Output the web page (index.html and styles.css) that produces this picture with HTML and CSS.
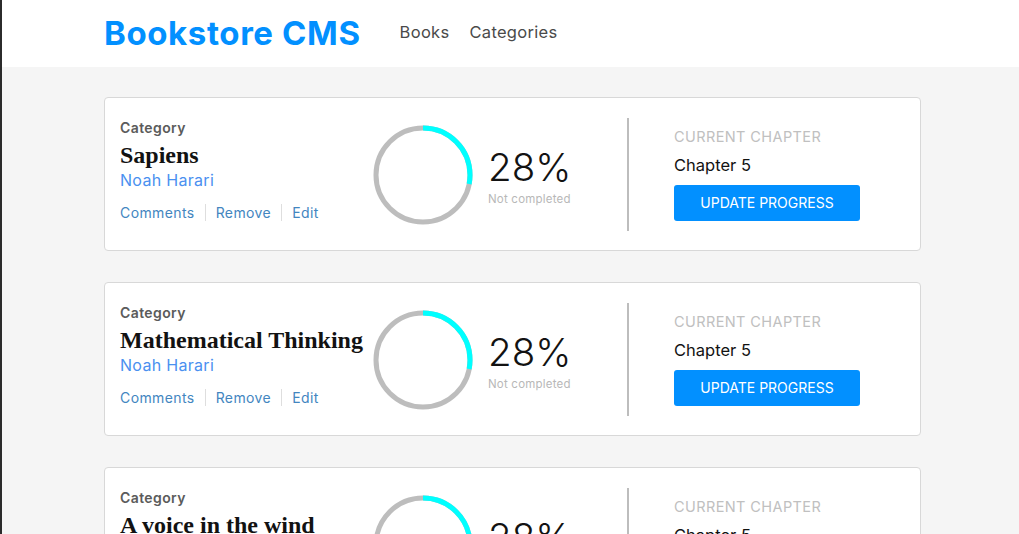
FILE: index.html
```html
<!DOCTYPE html>
<html lang="en">
<head>
<meta charset="utf-8">
<title>Bookstore CMS</title>
<link rel="stylesheet" href="styles.css">
</head>
<body>
<div class="page">
  <header class="header">
    <div class="header-inner">
      <h1 class="logo">Bookstore CMS</h1>
      <nav class="nav">
        <a href="#" class="nav-link">Books</a>
        <a href="#" class="nav-link">Categories</a>
      </nav>
    </div>
  </header>
  <main class="main">
    <div class="card">
      <div class="info">
        <div class="category">Category</div>
        <div class="title">Sapiens</div>
        <div class="author">Noah Harari</div>
        <div class="actions">
          <a href="#" class="action">Comments</a>
          <span class="sep"></span>
          <a href="#" class="action">Remove</a>
          <span class="sep"></span>
          <a href="#" class="action">Edit</a>
        </div>
      </div>
      <div class="progress">
        <svg class="ring" width="100" height="100" viewBox="0 0 100 100">
          <circle cx="50" cy="50" r="47" fill="none" stroke="#bdbdbd" stroke-width="5"/>
          <circle cx="50" cy="50" r="47" fill="none" stroke="#00ffff" stroke-width="5" stroke-dasharray="82.7 300" transform="rotate(-90 50 50)"/>
        </svg>
        <div class="stats">
          <div class="percent">28%</div>
          <div class="status">Not completed</div>
        </div>
      </div>
      <div class="divider"></div>
      <div class="chapter">
        <div class="chapter-label">CURRENT CHAPTER</div>
        <div class="chapter-name">Chapter 5</div>
        <button class="btn">UPDATE PROGRESS</button>
      </div>
    </div>
    <div class="card">
      <div class="info">
        <div class="category">Category</div>
        <div class="title">Mathematical Thinking</div>
        <div class="author">Noah Harari</div>
        <div class="actions">
          <a href="#" class="action">Comments</a>
          <span class="sep"></span>
          <a href="#" class="action">Remove</a>
          <span class="sep"></span>
          <a href="#" class="action">Edit</a>
        </div>
      </div>
      <div class="progress">
        <svg class="ring" width="100" height="100" viewBox="0 0 100 100">
          <circle cx="50" cy="50" r="47" fill="none" stroke="#bdbdbd" stroke-width="5"/>
          <circle cx="50" cy="50" r="47" fill="none" stroke="#00ffff" stroke-width="5" stroke-dasharray="82.7 300" transform="rotate(-90 50 50)"/>
        </svg>
        <div class="stats">
          <div class="percent">28%</div>
          <div class="status">Not completed</div>
        </div>
      </div>
      <div class="divider"></div>
      <div class="chapter">
        <div class="chapter-label">CURRENT CHAPTER</div>
        <div class="chapter-name">Chapter 5</div>
        <button class="btn">UPDATE PROGRESS</button>
      </div>
    </div>
    <div class="card">
      <div class="info">
        <div class="category">Category</div>
        <div class="title">A voice in the wind</div>
        <div class="author">Noah Harari</div>
        <div class="actions">
          <a href="#" class="action">Comments</a>
          <span class="sep"></span>
          <a href="#" class="action">Remove</a>
          <span class="sep"></span>
          <a href="#" class="action">Edit</a>
        </div>
      </div>
      <div class="progress">
        <svg class="ring" width="100" height="100" viewBox="0 0 100 100">
          <circle cx="50" cy="50" r="47" fill="none" stroke="#bdbdbd" stroke-width="5"/>
          <circle cx="50" cy="50" r="47" fill="none" stroke="#00ffff" stroke-width="5" stroke-dasharray="82.7 300" transform="rotate(-90 50 50)"/>
        </svg>
        <div class="stats">
          <div class="percent">28%</div>
          <div class="status">Not completed</div>
        </div>
      </div>
      <div class="divider"></div>
      <div class="chapter">
        <div class="chapter-label">CURRENT CHAPTER</div>
        <div class="chapter-name">Chapter 5</div>
        <button class="btn">UPDATE PROGRESS</button>
      </div>
    </div>
  </main>
</div>
</body>
</html>
```
FILE: styles.css
```css
* { box-sizing: border-box; }
html, body { margin: 0; padding: 0; }
body {
  font-family: "Inter", "Open Sans", sans-serif;
  background: #f5f5f5;
  overflow: hidden;
  height: 534px;
}
.page {
  border-left: 2px solid #2b2b2b;
  height: 534px;
  overflow: hidden;
}
.header {
  background: #fff;
  height: 67px;
}
.header-inner {
  padding-left: 102px;
  display: flex;
  align-items: center;
  height: 67px;
}
.logo {
  margin: 0;
  font-size: 33px;
  font-weight: 700;
  color: #0290ff;
  letter-spacing: 0.6px;
  margin-top: -2px;
}
.nav {
  display: flex;
  gap: 20px;
  margin-left: 39px;
  margin-top: -4px;
}
.nav-link {
  font-size: 16.5px;
  color: #4a4a4a;
  text-decoration: none;
  letter-spacing: 0.3px;
}
.main {
  padding: 30px 0 0 102px;
  display: flex;
  flex-direction: column;
  gap: 31px;
}
.card {
  width: 817px;
  height: 154px;
  background: #fff;
  border: 1px solid #d8d8d8;
  border-radius: 4px;
  display: flex;
  align-items: center;
  padding: 0 15px;
  flex-shrink: 0;
}
.info {
  width: 253px;
  flex-shrink: 0;
  display: flex;
  flex-direction: column;
  margin-top: -8px;
}
.category {
  font-size: 14px;
  font-weight: 600;
  color: #5b5b5b;
  line-height: 18px;
  letter-spacing: 0.4px;
}
.title {
  font-family: "Liberation Serif", serif;
  font-weight: 700;
  font-size: 24px;
  color: #121212;
  line-height: 28px;
  margin-top: 4px;
  white-space: nowrap;
}
.author {
  font-size: 16px;
  color: #4a90f0;
  line-height: 20px;
  letter-spacing: 0.3px;
  margin-top: 1px;
}
.actions {
  display: flex;
  align-items: center;
  margin-top: 14px;
}
.action {
  font-size: 14px;
  color: #4386bf;
  text-decoration: none;
  letter-spacing: 0.4px;
}
.sep {
  width: 1px;
  height: 17px;
  background: #dedede;
  margin: 0 10px;
}
.progress {
  width: 254px;
  flex-shrink: 0;
  display: flex;
  align-items: center;
  padding-top: 2px;
}
.ring {
  display: block;
  flex-shrink: 0;
}
.stats {
  margin-left: 15px;
  display: flex;
  flex-direction: column;
  margin-top: 1px;
}
.percent {
  font-size: 38.5px;
  font-weight: 300;
  color: #121212;
  line-height: 44px;
}
.status {
  font-size: 11.5px;
  color: #b8b8b8;
  margin-top: 3px;
  letter-spacing: 0.2px;
}
.divider {
  width: 2px;
  height: 113px;
  background: #bdbdbd;
  flex-shrink: 0;
}
.chapter {
  margin-left: 45px;
  display: flex;
  flex-direction: column;
}
.chapter-label {
  font-size: 14.5px;
  color: #c0c0c0;
  line-height: 18px;
  letter-spacing: 0.4px;
}
.chapter-name {
  font-size: 16.5px;
  color: #121212;
  margin-top: 9px;
  line-height: 20px;
}
.btn {
  margin-top: 10px;
  width: 186px;
  height: 36px;
  background: #0290ff;
  color: #fff;
  border: none;
  border-radius: 3px;
  font-family: inherit;
  font-size: 14px;
  padding: 0;
}
```
